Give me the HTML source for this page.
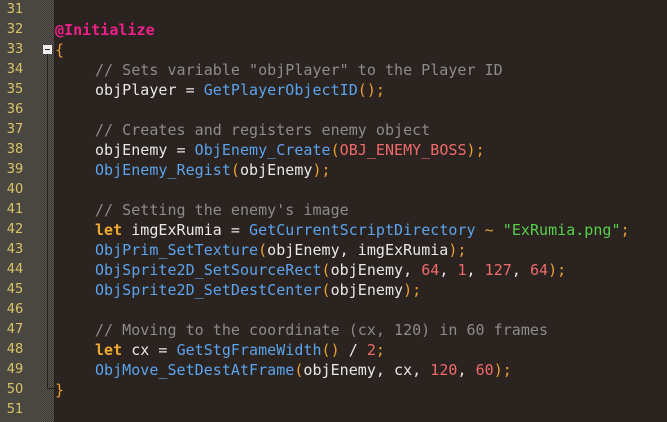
<!DOCTYPE html><html><head><style>
body{margin:0;width:667px;height:422px;background:#2a231f;overflow:hidden;position:relative;font-family:"DejaVu Sans Mono","Liberation Mono",monospace;font-size:15px}
#g{position:absolute;left:0;top:0;width:40px;height:422px;background:#4a4740}
#h{position:absolute;left:40px;top:0;width:14px;height:422px;background:repeating-conic-gradient(#5a5650 0 25%,#3a3733 0 50%) 0 0/2px 2px}
.n{position:absolute;left:0;width:30px;text-align:center;color:#d9c46a;font-size:13px;font-family:"DejaVu Sans",sans-serif;line-height:20px}
.l{position:absolute;left:95px;line-height:20px;white-space:pre;color:#e8e8e8;letter-spacing:0.03px}
.u{left:55px}
.c{color:#8c8c8c}.f{color:#5ba3ec}.k{color:#f0a830;font-weight:bold}.p{color:#eba032}.r{color:#f06a6a}.s{color:#57d04a}.m{color:#f0208a;font-weight:bold}
</style></head><body>
<div id="g"></div><div id="h"></div>
<div style="position:absolute;left:47px;top:52px;width:1px;height:337px;background:#222"></div>
<div style="position:absolute;left:47px;top:388px;width:7px;height:1px;background:#222"></div>
<div style="position:absolute;left:43px;top:45px;width:9px;height:9px;background:#eee"><div style="position:absolute;left:2px;top:4px;width:5px;height:1px;background:#222"></div></div>
<div class="n" style="top:0">31</div><div class="n" style="top:20px">32</div><div class="n" style="top:40px">33</div><div class="n" style="top:60px">34</div><div class="n" style="top:80px">35</div><div class="n" style="top:100px">36</div><div class="n" style="top:120px">37</div><div class="n" style="top:140px">38</div><div class="n" style="top:160px">39</div><div class="n" style="top:180px">40</div><div class="n" style="top:200px">41</div><div class="n" style="top:220px">42</div><div class="n" style="top:240px">43</div><div class="n" style="top:260px">44</div><div class="n" style="top:280px">45</div><div class="n" style="top:300px">46</div><div class="n" style="top:320px">47</div><div class="n" style="top:340px">48</div><div class="n" style="top:360px">49</div><div class="n" style="top:380px">50</div><div class="n" style="top:400px">51</div>
<div class="l u" style="top:20px"><span class="m">@Initialize</span></div>
<div class="l u" style="top:40px"><span class="p">{</span></div>
<div class="l" style="top:60px"><span class="c">// Sets variable "objPlayer" to the Player ID</span></div>
<div class="l" style="top:80px">objPlayer = <span class="f">GetPlayerObjectID</span><span class="p">();</span></div>
<div class="l" style="top:120px"><span class="c">// Creates and registers enemy object</span></div>
<div class="l" style="top:140px">objEnemy = <span class="f">ObjEnemy_Create</span><span class="p">(</span><span class="r">OBJ_ENEMY_BOSS</span><span class="p">);</span></div>
<div class="l" style="top:160px"><span class="f">ObjEnemy_Regist</span><span class="p">(</span>objEnemy<span class="p">);</span></div>
<div class="l" style="top:200px"><span class="c">// Setting the enemy's image</span></div>
<div class="l" style="top:220px"><span class="k">let</span> imgExRumia = <span class="f">GetCurrentScriptDirectory</span> <span class="p">~</span> <span class="s">"ExRumia.png"</span><span class="p">;</span></div>
<div class="l" style="top:240px"><span class="f">ObjPrim_SetTexture</span><span class="p">(</span>objEnemy, imgExRumia<span class="p">);</span></div>
<div class="l" style="top:260px"><span class="f">ObjSprite2D_SetSourceRect</span><span class="p">(</span>objEnemy, <span class="r">64</span>, <span class="r">1</span>, <span class="r">127</span>, <span class="r">64</span><span class="p">);</span></div>
<div class="l" style="top:280px"><span class="f">ObjSprite2D_SetDestCenter</span><span class="p">(</span>objEnemy<span class="p">);</span></div>
<div class="l" style="top:320px"><span class="c">// Moving to the coordinate (cx, 120) in 60 frames</span></div>
<div class="l" style="top:340px"><span class="k">let</span> cx = <span class="f">GetStgFrameWidth</span><span class="p">()</span> / <span class="r">2</span><span class="p">;</span></div>
<div class="l" style="top:360px"><span class="f">ObjMove_SetDestAtFrame</span><span class="p">(</span>objEnemy, cx, <span class="r">120</span>, <span class="r">60</span><span class="p">);</span></div>
<div class="l u" style="top:380px"><span class="p">}</span></div>
</body></html>
